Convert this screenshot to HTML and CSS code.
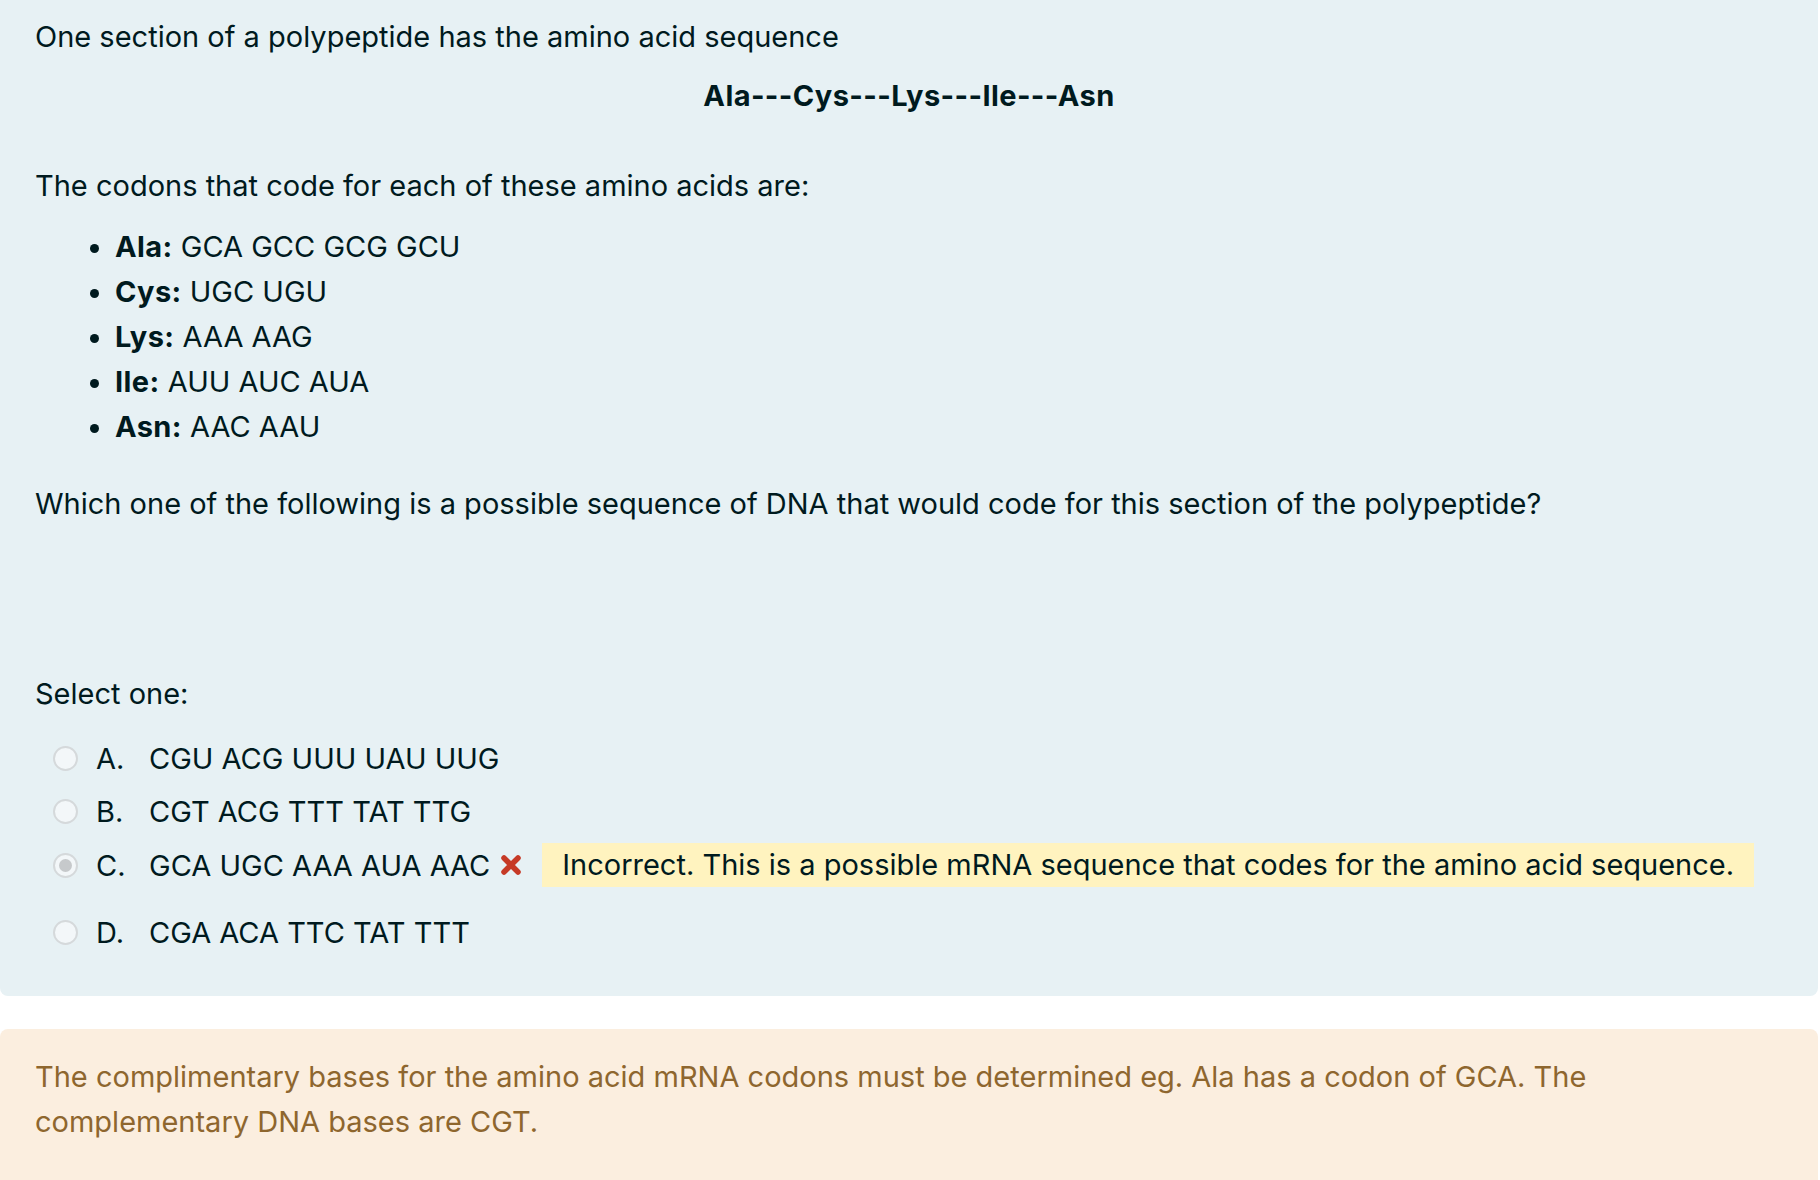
FILE: index.html
```html
<!DOCTYPE html>
<html lang="en">
<head>
<meta charset="utf-8">
<title>Question</title>
<link rel="stylesheet" href="styles.css">
</head>
<body>
<div class="formulation">
  <p class="intro">One section of a polypeptide has the amino acid sequence</p>
  <p class="seq">Ala---Cys---Lys---Ile---Asn</p>
  <p class="codons">The codons that code for each of these amino acids are:</p>
  <ul class="codon-list">
    <li><b>Ala:</b> GCA GCC GCG GCU</li>
    <li><b>Cys:</b> UGC UGU</li>
    <li><b>Lys:</b> AAA AAG</li>
    <li><b>Ile:</b> AUU AUC AUA</li>
    <li><b>Asn:</b> AAC AAU</li>
  </ul>
  <p class="question">Which one of the following is a possible sequence of DNA that would code for this section of the polypeptide?</p>
  <p class="prompt">Select one:</p>
  <div class="answers">
    <div class="option">
      <span class="radio"></span>
      <span class="letter">A.</span>
      <span class="text">CGU ACG UUU UAU UUG</span>
    </div>
    <div class="option">
      <span class="radio"></span>
      <span class="letter">B.</span>
      <span class="text">CGT ACG TTT TAT TTG</span>
    </div>
    <div class="option option-selected">
      <span class="radio radio-checked"></span>
      <span class="letter">C.</span>
      <span class="text">GCA UGC AAA AUA AAC</span>
      <svg class="cross" viewBox="0 0 22 22" width="22" height="22" aria-hidden="true">
        <path d="M4 4 L18 18 M18 4 L4 18" stroke="#c63a26" stroke-width="5.5" stroke-linecap="round"/>
      </svg>
      <span class="specificfeedback">Incorrect. This is a possible mRNA sequence that codes for the amino acid sequence.</span>
    </div>
    <div class="option">
      <span class="radio"></span>
      <span class="letter">D.</span>
      <span class="text">CGA ACA TTC TAT TTT</span>
    </div>
  </div>
</div>
<div class="outcome">
  <p>The complimentary bases for the amino acid mRNA codons must be determined eg. Ala has a codon of GCA. The complementary DNA bases are CGT.</p>
</div>
</body>
</html>
```

FILE: styles.css
```css
html, body {
  margin: 0;
  padding: 0;
  background: #ffffff;
}

body {
  font-family: Inter, "Noto Sans", "Liberation Sans", sans-serif;
  font-size: 29px;
  line-height: 45px;
  color: #001a1e;
}

p {
  margin: 0;
}

b {
  font-weight: 700;
  letter-spacing: 0.4px;
}

.formulation {
  width: 1818px;
  box-sizing: border-box;
  background: #e7f1f4;
  border-radius: 0 0 8px 8px;
  padding: 14px 35px 37px 35px;
}

.seq {
  margin-top: 14px;
  text-align: center;
  font-weight: 700;
  letter-spacing: 0.4px;
}

.codons {
  margin-top: 45px;
}

.codon-list {
  margin: 16px 0 0 0;
  padding-left: 80px;
}

.question {
  margin-top: 32px;
}

.prompt {
  margin-top: 145px;
}

.answers {
  margin-top: 16px;
  padding-left: 18px;
}

.option {
  display: flex;
  align-items: center;
  height: 53px;
}

.option-selected {
  height: 54px;
  margin-bottom: 14px;
}

.radio {
  width: 25px;
  height: 25px;
  box-sizing: border-box;
  border: 2px solid #d5d9db;
  border-radius: 50%;
  background: #f3f7f9;
  flex: none;
  display: flex;
  align-items: center;
  justify-content: center;
}

.radio-checked::after {
  content: "";
  width: 13px;
  height: 13px;
  border-radius: 50%;
  background: #c6c9cb;
}

.letter {
  margin-left: 18px;
  width: 53px;
  flex: none;
}

.text {
  flex: none;
}

.cross {
  margin-left: 10px;
  flex: none;
}

.specificfeedback {
  margin-left: 20px;
  background: #fff3bf;
  padding: 0 20px;
  line-height: 44px;
}

.outcome {
  width: 1818px;
  box-sizing: border-box;
  margin-top: 33px;
  background: #fbeedf;
  color: #8e662e;
  border-radius: 8px 8px 0 0;
  padding: 25px 35px 40px 35px;
  min-height: 152px;
}
```
